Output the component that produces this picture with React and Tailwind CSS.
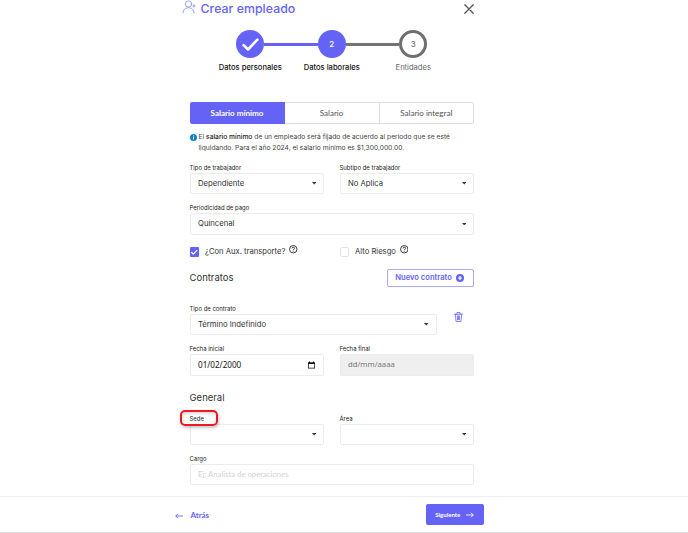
import clsx from "clsx";

const CheckIcon = ({ className, strokeWidth = 3 }) => (
  <svg className={className} viewBox="0 0 16 16" fill="none" stroke="currentColor" strokeWidth={strokeWidth} strokeLinecap="round" strokeLinejoin="round">
    <path d="M1.5 8.5 5.7 12.7 14.5 3.5" />
  </svg>
);

const HelpIcon = () => (
  <svg className="mb-[5px] size-[8.5px] text-[#333]" viewBox="0 0 16 16" fill="none" stroke="currentColor" strokeWidth="1.8">
    <circle cx="8" cy="8" r="7" />
    <path d="M5.6 6.4C5.6 4.9 6.6 4 8 4s2.5.9 2.5 2.2C10.5 7.7 8 7.9 8 9.6M8 10.9v1.6" />
  </svg>
);

const Caret = () => (
  <svg className="mr-px h-[2.5px] w-[4.5px] text-[#333]" viewBox="0 0 10 6" preserveAspectRatio="none" fill="currentColor">
    <path d="M0 0h10L5 6z" />
  </svg>
);

function Field({ label, children, className, boxClassName }) {
  return (
    <div className={clsx("flex flex-col", className)}>
      <label className="h-[11px] text-[5.95px] leading-[11px] whitespace-nowrap text-[#222]">{label}</label>
      <div
        className={clsx(
          "flex items-center justify-between rounded-[2px] border border-[#ececec] pr-[6px] pl-[7.5px] text-[7.7px] text-[#333]",
          boxClassName || "h-[21px]"
        )}
      >
        {children}
      </div>
    </div>
  );
}

function Select({ label, value, className, boxClassName }) {
  return (
    <Field label={label} className={className} boxClassName={boxClassName}>
      <span>{value}</span>
      <Caret />
    </Field>
  );
}

function Step({ label, children, circleClassName, labelClassName }) {
  return (
    <div className="flex w-[28px] flex-col items-center">
      <div className={clsx("flex size-[28px] items-center justify-center rounded-full text-[8px]", circleClassName)}>
        {children}
      </div>
      <span className={clsx("mt-[4px] text-[7.6px] leading-[11px] whitespace-nowrap", labelClassName)}>{label}</span>
    </div>
  );
}

export default function App() {
  return (
    <div className="flex h-[533px] w-[688px] flex-col overflow-hidden border-b border-[#dedede] bg-white font-['Inter',sans-serif]">
      <main className="ml-[189.5px] flex h-[496px] w-[284.5px] shrink-0 flex-col">
        <header className="-ml-[7.5px] flex h-[17px] items-center">
          <svg className="-mt-[3px] h-[14px] w-[14px] text-[#8f8cf5]" viewBox="0 0 28 28" fill="none" stroke="currentColor" strokeWidth="1.7" strokeLinecap="round">
            <circle cx="13" cy="8" r="6.3" />
            <path d="M2 26c.5-7 4.5-10.5 11-10.5S23.5 19 24 26M24 9.5v5M21.5 12h5" />
          </svg>
          <h1 className="ml-[4.5px] text-[12.3px] leading-[17px] font-medium tracking-[0.05px] whitespace-nowrap text-[#6563f5]">Crear empleado</h1>
          <svg className="mr-[0.5px] ml-auto size-[10px] text-[#555]" viewBox="0 0 10 10" fill="none" stroke="currentColor" strokeWidth="1.3" strokeLinecap="round">
            <path d="M.8.8 9.2 9.2M9.2.8.8 9.2" />
          </svg>
        </header>

        <div className="mt-[13px] flex h-[44px] justify-center">
          <Step label="Datos personales" circleClassName="bg-[#6563f5] text-white" labelClassName="font-medium text-[#111]">
            <CheckIcon className="size-[17px]" strokeWidth={2.4} />
          </Step>
          <div className="mt-[13px] h-[2.5px] w-[53.5px] bg-[#6563f5]" />
          <Step label="Datos laborales" circleClassName="bg-[#6563f5] font-medium text-white" labelClassName="font-medium text-[#111]">
            2
          </Step>
          <div className="mt-[13px] h-[2.5px] w-[53.5px] bg-[#737373]" />
          <Step label="Entidades" circleClassName="border-[3px] border-[#6f6f6f] text-[#666]" labelClassName="text-[#666]">
            3
          </Step>
        </div>

        <div className="mt-[28px] flex h-[22px] shrink-0 font-['Lato',sans-serif] text-[8.05px] text-[#555]">
          <div className="flex w-[95px] items-center justify-center rounded-l-[2px] bg-[#6563f5] font-bold text-white">Salario mínimo</div>
          <div className="flex w-[95px] items-center justify-center border border-l-0 border-[#dedede]">Salario</div>
          <div className="flex flex-1 items-center justify-center rounded-r-[2px] border border-l-0 border-[#dedede]">Salario integral</div>
        </div>

        <div className="mt-[7.5px] flex h-[22.5px] text-[6.7px] leading-[11px] whitespace-nowrap text-[#444]">
          <svg className="mt-[2px] mr-[2px] size-[7px] shrink-0" viewBox="0 0 14 14">
            <circle cx="7" cy="7" r="7" fill="#087fd0" />
            <path d="M6 3h2v2H6zM6 6h2v5H6z" fill="#fff" />
          </svg>
          <p>
            El <span className="font-medium text-[#222]">salario mínimo</span> de un empleado será fijado de acuerdo al periodo que se esté
            <br />
            liquidando. Para el año 2024, el salario mínimo es $1,300,000.00.
          </p>
        </div>

        <div className="mt-[8px] flex gap-[15.5px]">
          <Select label="Tipo de trabajador" value="Dependiente" className="flex-1" />
          <Select label="Subtipo de trabajador" value="No Aplica" className="flex-1" />
        </div>
        <Select label="Periodicidad de pago" value="Quincenal" className="mt-[8px]" boxClassName="h-[22px]" />

        <div className="mt-[11px] flex h-[12px] gap-[15.5px] text-[7.65px] text-[#333]">
          <div className="flex flex-1 items-center">
            <span className="mr-[6px] flex size-[9.5px] items-center justify-center rounded-[1px] bg-[#6563f5] text-white">
              <CheckIcon className="size-[6.5px]" />
            </span>
            <span className="mr-[4px]">¿Con Aux. transporte?</span>
            <HelpIcon />
          </div>
          <div className="flex flex-1 items-center">
            <span className="mr-[6px] size-[9.5px] rounded-[1.5px] border border-[#e2e2e2]" />
            <span className="mr-[4px]">Alto Riesgo</span>
            <HelpIcon />
          </div>
        </div>

        <div className="mt-[11px] flex h-[18px] items-center justify-between">
          <h2 className="text-[9.5px] text-[#333]">Contratos</h2>
          <button className="flex h-[18px] w-[87px] items-center justify-center gap-[4px] rounded-[2px] border border-[#a9a8fa] pr-[2px] text-[7.6px] font-semibold whitespace-nowrap text-[#6563f5]">
            Nuevo contrato
            <svg className="size-[8px]" viewBox="0 0 16 16">
              <circle cx="8" cy="8" r="8" fill="currentColor" />
              <path d="M8 4v8M4 8h8" stroke="#fff" strokeWidth="2.4" />
            </svg>
          </button>
        </div>

        <div className="mt-[16px] flex">
          <Select label="Tipo de contrato" value="Término Indefinido" className="w-[247px]" />
          <svg className="mt-[8.5px] ml-[17.5px] h-[10px] w-[9px] text-[#6563f5]" viewBox="0 0 18 20" fill="none" stroke="currentColor" strokeWidth="1.6" strokeLinecap="round" strokeLinejoin="round">
            <path d="M1 4.5h16M6 4.5V1h6v3.5M2.8 4.5 4 19h10L15.2 4.5M7 8v7.5M11 8v7.5M9 8v7.5" />
          </svg>
        </div>

        <div className="mt-[8px] flex gap-[15.5px]">
          <Field label="Fecha inicial" className="flex-1" boxClassName="h-[22px]">
            <span className="font-['Noto_Sans',sans-serif] text-[8.15px] text-[#111]">01/02/2000</span>
            <svg className="mr-[2px] h-[8px] w-[7px] text-[#111]" viewBox="0 0 14 16" fill="currentColor">
              <path d="M2 1h2v1.5h6V1h2v1.5h2V15H0V2.5h2zM1.5 6v7.5h11V6z" />
            </svg>
          </Field>
          <Field label="Fecha final" className="flex-1" boxClassName="h-[22px] bg-[#efefef]">
            <span className="font-['Noto_Sans',sans-serif] text-[7.7px] text-[#777]">dd/mm/aaaa</span>
          </Field>
        </div>

        <h2 className="mt-[14px] h-[16px] text-[9.5px] leading-[16px] text-[#333]">General</h2>

        <div className="mt-[7px] flex gap-[15.5px]">
          <div className="relative flex flex-1">
            <Select label="Sede" className="flex-1" />
            <div className="absolute -top-[3px] -left-[9.5px] h-[15.5px] w-[38px] rounded-[5px] border-2 border-[#ee1822] shadow-[1px_2px_3px_rgba(0,0,0,0.22),inset_1px_2px_3px_rgba(0,0,0,0.15)]" />
          </div>
          <Select label="Área" className="flex-1" />
        </div>
        <Field label="Cargo" className="mt-[8px]">
          <span className="font-['Lato',sans-serif] text-[7.75px] text-[#d2d2d2]">Ej: Analista de operaciones</span>
        </Field>
      </main>

      <footer className="flex h-[36px] shrink-0 border-t border-[#eee]">
        <div className="ml-[175px] flex w-[309px] items-start justify-between">
          <button className="mt-[13px] flex h-[11px] items-center gap-[7.5px] font-['Lato',sans-serif] text-[7.9px] font-bold text-[#6563f5]">
            <svg className="h-[6px] w-[8px]" viewBox="0 0 16 12" fill="none" stroke="currentColor" strokeWidth="1.8">
              <path d="M16 6H1.5M6 1.5 1.5 6 6 10.5" />
            </svg>
            Atrás
          </button>
          <button className="mt-[7px] flex h-[21px] w-[58.5px] items-center justify-center gap-[6px] rounded-[2px] bg-[#6563f5] font-['Lato',sans-serif] text-[6.1px] font-bold text-white">
            Siguiente
            <svg className="h-[6px] w-[8px]" viewBox="0 0 16 12" fill="none" stroke="currentColor" strokeWidth="1.8">
              <path d="M0 6h14.5M10 1.5 14.5 6 10 10.5" />
            </svg>
          </button>
        </div>
      </footer>
    </div>
  );
}
